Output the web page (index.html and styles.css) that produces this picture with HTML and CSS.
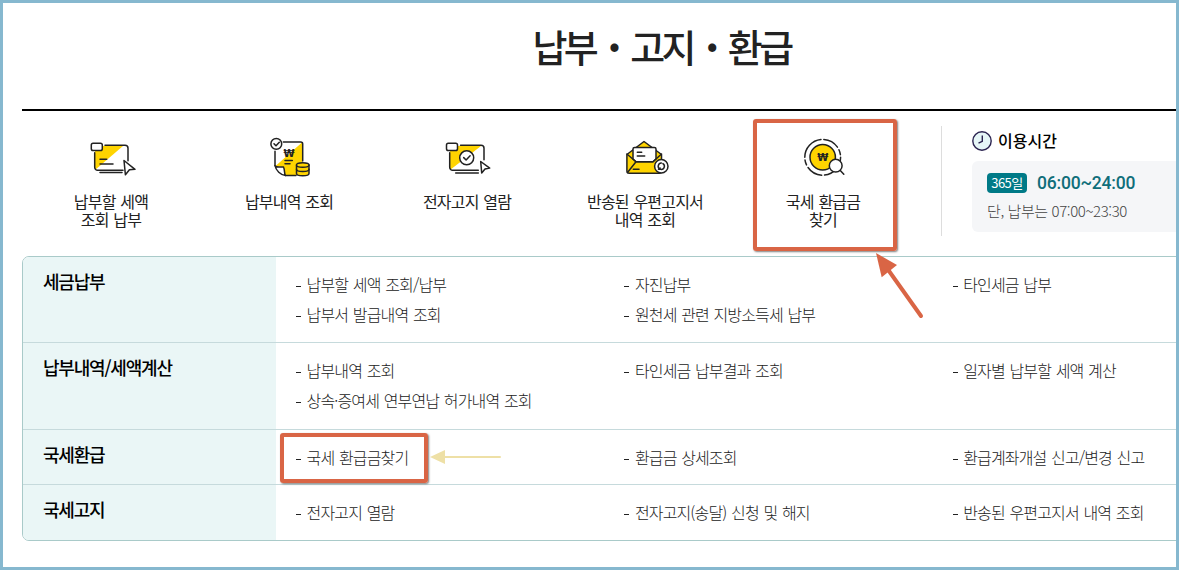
FILE: index.html
```html
<!DOCTYPE html>
<html lang="ko">
<head>
  <meta charset="UTF-8">
  <meta name="viewport" content="width=device-width, initial-scale=1.0">
  <title>납부 · 고지 · 환급</title>
  <link rel="stylesheet" href="styles.css">
</head>
<body>
<div class="frame">
  <div class="content">
    <h1 class="title">납부 <span class="dot">·</span> 고지 <span class="dot">·</span> 환급</h1>

    <div class="top">
      <!-- quick menu -->
      <ul class="quick">
        <li>
          <svg class="icon" viewBox="0 0 52 42">
            <path class="fill" d="M10 9H38L10 33z"/>
            <path d="M20 8.3h20a3 3 0 0 1 3 3v12.4M9.7 15.7v14.6a3 3 0 0 0 3 3H38"/>
            <rect class="white" x="6.3" y="6.3" width="11" height="7.3" rx="1.8"/>
            <path d="M15 22.3h6.7M15 27h13M15 35.6h22"/>
            <path class="white" d="M39 23.5l11 8.8-5.6.5-4 5z"/>
          </svg>
          <span>납부할 세액<br>조회 납부</span>
        </li>
        <li>
          <svg class="icon" viewBox="0 0 52 42">
            <path class="fill" d="M39 5.5V38H22l-1.5-8-8-1z"/>
            <path d="M20.3 5h17.4a2 2 0 0 1 2 2v17M12 14.3v14.4M22.5 38.6H33"/>
            <path class="white" d="M12 28.7C14 31 17 29.5 20.5 30c1.5 3 .5 6.5 2 8.600-5-.6-9.500-4.900-10.500-9.900z"/>
            <circle class="white" cx="13.3" cy="6.9" r="5.4"/>
            <path d="M11 6.8l2 2 3.3-3.5M22 23.5h7.3M22 26.8h5"/>
            <text class="won" x="26" y="19.5">₩</text>
            <path class="gold" d="M33.5 28v8.5c0 3 12.5 3 12.5 0V28"/>
            <ellipse class="gold" cx="39.75" cy="28" rx="6.25" ry="2.3"/>
            <path d="M33.5 32.2c0 3 12.5 3 12.5 0"/>
          </svg>
          <span>납부내역 조회</span>
        </li>
        <li>
          <svg class="icon" viewBox="0 0 52 42">
            <path class="fill" d="M9 9H40L9 33z"/>
            <path d="M19.5 8.3H40a3 3 0 0 1 3 3v11.4M8.7 15.7v14.6a3 3 0 0 0 3 3H37.3M14.7 36h22.6"/>
            <rect class="white" x="5.5" y="6.3" width="11" height="7.3" rx="1.8"/>
            <circle class="white" cx="25.7" cy="20.8" r="7"/>
            <path d="M22.7 20.6l2.4 2.4 4-4.2"/>
            <path class="white" d="M39.7 24.5l9 6.6-4.7.9-3.3 4z"/>
          </svg>
          <span>전자고지 열람</span>
        </li>
        <li>
          <svg class="icon" viewBox="0 0 52 42">
            <path class="fill line" d="M7.9 17.5L25 4.5l17.5 13V34a2.3 2.3 0 0 1-2.3 2.3h-30A2.3 2.3 0 0 1 7.9 34z"/>
            <path class="white" d="M14 22V12a1.6 1.6 0 0 1 1.6-1.6h19.8A1.6 1.6 0 0 1 37 12v10l-3 2.7H17z"/>
            <path d="M7.9 17l9.1 7.7h17l8.5-7.7M8.5 35.5L17 24.7M18.3 15.3h4.4M18.3 19h7.4M14.3 32.3H20"/>
            <circle class="white" cx="42.3" cy="29.3" r="6.7"/>
            <path d="M42.3 26.1a3.2 3.2 0 0 0-1.6 5.9M42.3 32.500a3.200 3.200 0 0 0 1.600-5.900M39.500 32.300h1.600v-1.400"/>
          </svg>
          <span>반송된 우편고지서<br>내역 조회</span>
        </li>
        <li>
          <svg class="icon" viewBox="0 0 52 42">
            <circle class="ring" cx="25.7" cy="20.3" r="17.9"/>
            <circle class="fill line" cx="25.7" cy="20.3" r="12.7"/>
            <text class="won" x="25.7" y="24">₩</text>
            <circle class="white" cx="38.7" cy="28.7" r="6.4"/>
            <path d="M43.3 33.4l3.5 3.800"/>
          </svg>
          <span>국세 환급금<br>찾기</span>
        </li>
      </ul>

      <!-- service hours -->
      <div class="hours">
        <h2 class="hours-title">
          <svg class="clock" viewBox="0 0 20 20">
            <circle cx="10" cy="10" r="9.2"/>
            <path d="M10.3 4.5v5.8L6.5 12.2"/>
          </svg>
          <span>이용시간</span>
        </h2>
        <div class="hours-box">
          <p class="hours-main"><span class="badge">365일</span><strong>06:00~24:00</strong></p>
          <p class="hours-sub">단, 납부는 07:00~23:30</p>
        </div>
      </div>
    </div>

    <!-- full menu -->
    <div class="menu">
      <h3>세금납부</h3>
      <ul>
        <li>납부할 세액 조회/납부</li>
        <li>자진납부</li>
        <li>타인세금 납부</li>
        <li>납부서 발급내역 조회</li>
        <li>원천세 관련 지방소득세 납부</li>
      </ul>
      <h3>납부내역/세액계산</h3>
      <ul>
        <li>납부내역 조회</li>
        <li>타인세금 납부결과 조회</li>
        <li>일자별 납부할 세액 계산</li>
        <li>상속·증여세 연부연납 허가내역 조회</li>
      </ul>
      <h3>국세환급</h3>
      <ul>
        <li>국세 환급금찾기</li>
        <li>환급금 상세조회</li>
        <li>환급계좌개설 신고/변경 신고</li>
      </ul>
      <h3>국세고지</h3>
      <ul>
        <li>전자고지 열람</li>
        <li>전자고지(송달) 신청 및 해지</li>
        <li>반송된 우편고지서 내역 조회</li>
      </ul>
    </div>
  </div>

  <!-- markers over the page -->
  <div class="mark mark-quick"></div>
  <div class="mark mark-menu"></div>
  <svg class="arrow arrow-red" viewBox="0 0 50 68">
    <path class="shaft" d="M14 19l32 45"/>
    <path class="head" d="M1 1l21 12-15.3 12.3z"/>
  </svg>
  <svg class="arrow arrow-sand" viewBox="0 0 72 16">
    <path class="shaft" d="M14 8h56"/>
    <path class="head" d="M0 8l15-7v14z"/>
  </svg>
</div>
</body>
</html>
```
FILE: styles.css
```css
* {
  box-sizing: border-box;
}

body {
  margin: 0;
  font-family: "Noto Sans CJK KR", "Noto Sans", sans-serif;
  color: #222;
}

h1, h2, h3, p, ul {
  margin: 0;
  padding: 0;
}

ul {
  list-style: none;
}

.frame {
  position: relative;
  width: 1179px;
  height: 570px;
  border: 3px solid #86b8cf;
  background-color: #fff;
  overflow: hidden;
}

/* wider than the frame, the right side is cut off */
.content {
  width: 1282px;
  margin-left: 19px;
}

.title {
  height: 108px;
  padding: 13px 3px 0 0;
  border-bottom: 2px solid #000;
  font-size: 38px;
  font-weight: 500;
  line-height: 60px;
  letter-spacing: -3.6px;
  word-spacing: 5.5px;
  text-align: center;
}

.dot {
  font-weight: 900;
}

.top {
  display: flex;
  height: 145px;
  padding-top: 15px;
}

.quick {
  display: flex;
  width: 919px;
}

.quick li {
  display: flex;
  flex-direction: column;
  align-items: center;
  width: 178px;
  padding-top: 11px;
  font-size: 16px;
  line-height: 18px;
  letter-spacing: -0.8px;
  word-spacing: 1px;
  text-align: center;
}

.icon {
  width: 52px;
  height: 42px;
  margin-bottom: 13px;
  fill: none;
  stroke: #222;
  stroke-width: 1.5;
  stroke-linecap: round;
  stroke-linejoin: round;
}

.icon .fill {
  fill: #ffd400;
  stroke: none;
}

.icon .line {
  stroke: #222;
}

.icon .gold {
  fill: #ffd400;
}

.icon .white {
  fill: #fff;
}

.icon .ring {
  stroke-dasharray: 26 3 16 3 5 3;
}

.icon .won {
  fill: #222;
  stroke: none;
  font-family: "DejaVu Sans", sans-serif;
  font-size: 10px;
  font-weight: bold;
  letter-spacing: 0;
  text-anchor: middle;
}

.hours {
  flex: 1;
  height: 110px;
  padding-left: 30px;
  border-left: 1px solid #ddd;
}

.hours-title {
  display: flex;
  align-items: center;
  gap: 6px;
  height: 30px;
  color: #000;
  font-size: 16px;
  font-weight: 500;
}

.hours-title span {
  padding-bottom: 2px;
}

.clock {
  width: 20px;
  height: 20px;
  fill: #e6f6f7;
  stroke: #2b2350;
  stroke-width: 1.4;
}

.hours-box {
  height: 71px;
  margin-top: 5px;
  padding: 10px 15px;
  border-radius: 6px;
  background-color: #f5f6f8;
}

.hours-main {
  display: flex;
  align-items: center;
  gap: 10px;
  height: 24px;
}

.hours-main strong {
  color: #0f6e7a;
  font-family: Roboto, "Noto Sans CJK KR", sans-serif;
  font-size: 17.5px;
  font-weight: 500;
  letter-spacing: -0.2px;
}

.badge {
  width: 40px;
  height: 20px;
  border-radius: 4px;
  background-color: #007a87;
  color: #fff;
  font-size: 13px;
  line-height: 19px;
  letter-spacing: -0.5px;
  text-align: center;
}

.hours-sub {
  color: #444;
  font-size: 15px;
  font-weight: 300;
  line-height: 32px;
  letter-spacing: -0.4px;
}

.menu {
  display: grid;
  grid-template-columns: 253px 1fr;
  grid-template-rows: 86px 87px 55px 55px;
  border: 1px solid #a9cac9;
  border-radius: 7px;
  overflow: hidden;
}

.menu h3 {
  padding: 11px 20px;
  border-bottom: 1px solid #c6dadc;
  background-color: #eaf6f6;
  color: #000;
  font-size: 18px;
  font-weight: 500;
  line-height: 27px;
  letter-spacing: -1.2px;
}

.menu ul {
  display: grid;
  grid-template-columns: repeat(3, 328.3px);
  grid-auto-rows: 30px;
  padding: 12px 20px 0;
  border-bottom: 1px solid #c6dadc;
}

.menu h3:nth-last-child(2),
.menu ul:last-child {
  border-bottom: none;
}

.menu li {
  display: flex;
  align-items: center;
  color: #222;
  font-size: 16px;
  font-weight: 300;
  letter-spacing: -0.85px;
  word-spacing: 1px;
  white-space: nowrap;
}

.menu li::before {
  content: "";
  width: 5px;
  height: 1px;
  margin: 4px 5.6px 0 0;
  background-color: #222;
}

.mark {
  position: absolute;
  border: 4px solid #d96545;
  border-radius: 3px;
  box-shadow: 1px 1px 2px rgba(0, 0, 0, 0.5);
}

.mark-quick {
  left: 750px;
  top: 116px;
  width: 144px;
  height: 132px;
}

.mark-menu {
  left: 277px;
  top: 430px;
  width: 148px;
  height: 50px;
}

.arrow {
  position: absolute;
}

.arrow .shaft {
  fill: none;
  stroke-linecap: round;
}

.arrow-red {
  left: 872px;
  top: 249px;
  width: 50px;
  height: 68px;
}

.arrow-red .shaft {
  stroke: #d96545;
  stroke-width: 4;
}

.arrow-red .head {
  fill: #d96545;
}

.arrow-sand {
  left: 427px;
  top: 446px;
  width: 72px;
  height: 16px;
}

.arrow-sand .shaft {
  stroke: #eee0a6;
  stroke-width: 2;
}

.arrow-sand .head {
  fill: #eee0a6;
}
```
